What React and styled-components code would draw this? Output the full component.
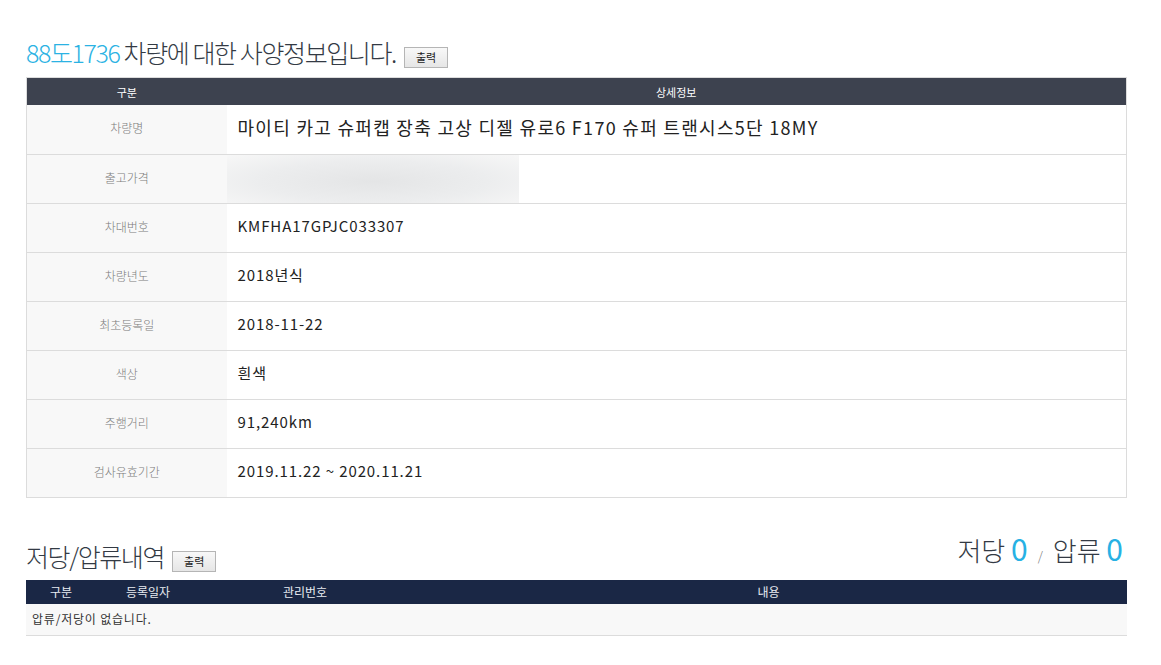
import React from "react";
import styled, { createGlobalStyle } from "styled-components";

const GlobalStyle = createGlobalStyle`
  html, body {
    margin: 0;
    padding: 0;
    background: #fff;
  }
  body {
    font-family: "Noto Sans CJK KR", "Noto Sans", sans-serif;
    color: #333;
  }
`;

const specRows = [
  { label: "차량명", value: "마이티 카고 슈퍼캡 장축 고상 디젤 유로6 F170 슈퍼 트랜시스5단 18MY", big: true },
  { label: "출고가격", value: null },
  { label: "차대번호", value: "KMFHA17GPJC033307" },
  { label: "차량년도", value: "2018년식" },
  { label: "최초등록일", value: "2018-11-22" },
  { label: "색상", value: "흰색" },
  { label: "주행거리", value: "91,240km" },
  { label: "검사유효기간", value: "2019.11.22 ~ 2020.11.21" },
];

export default function App() {
  return (
    <>
      <GlobalStyle />
      <Page>
        <TitleRow>
          <Title>
            <Plate>88도1736</Plate> 차량에 대한 사양정보입니다.
          </Title>
          <PrintButton>출력</PrintButton>
        </TitleRow>

        <SpecTable>
          <colgroup>
            <col style={{ width: 200 }} />
            <col />
          </colgroup>
          <thead>
            <tr>
              <SpecHead>구분</SpecHead>
              <SpecHead>상세정보</SpecHead>
            </tr>
          </thead>
          <tbody>
            {specRows.map((row) => (
              <tr key={row.label}>
                <LabelCell>{row.label}</LabelCell>
                <ValueCell $big={row.big}>
                  {row.value === null ? <Blurred /> : row.value}
                </ValueCell>
              </tr>
            ))}
          </tbody>
        </SpecTable>

        <SectionRow>
          <TitleRow $tight>
            <Title as="h3">저당/압류내역</Title>
            <PrintButton>출력</PrintButton>
          </TitleRow>
          <Counts>
            저당 <Count>0</Count>
            <Slash>/</Slash>
            압류 <Count>0</Count>
          </Counts>
        </SectionRow>

        <LienTable>
          <colgroup>
            <col style={{ width: 70 }} />
            <col style={{ width: 104 }} />
            <col style={{ width: 210 }} />
            <col />
          </colgroup>
          <thead>
            <tr>
              <LienHead>구분</LienHead>
              <LienHead>등록일자</LienHead>
              <LienHead>관리번호</LienHead>
              <LienHead>내용</LienHead>
            </tr>
          </thead>
          <tbody>
            <tr>
              <EmptyCell colSpan={4}>압류/저당이 없습니다.</EmptyCell>
            </tr>
          </tbody>
        </LienTable>
      </Page>
    </>
  );
}

const Page = styled.div`
  width: 1101px;
  margin-left: 26px;
  padding-top: 34px;
`;

const TitleRow = styled.div`
  display: flex;
  align-items: flex-end;
  gap: 8px;
  margin-bottom: ${(p) => (p.$tight ? "0" : "7px")};
`;

const Title = styled.h2`
  margin: 0;
  font-size: 25px;
  font-weight: 300;
  letter-spacing: -1.4px;
  line-height: 36px;
  color: #333a44;
`;

const Plate = styled.span`
  color: #2bb2e3;
`;

const PrintButton = styled.button`
  height: 21px;
  padding: 0 11px;
  margin-bottom: 2px;
  border: 1px solid #b5b5b5;
  background: linear-gradient(#f8f8f8, #e6e6e6);
  font-family: "Noto Sans CJK KR", sans-serif;
  font-size: 11px;
  color: #222;
  line-height: 19px;
`;

const SpecTable = styled.table`
  width: 100%;
  border-collapse: collapse;
  table-layout: fixed;
  border: 1px solid #dcdcdc;
`;

const SpecHead = styled.th`
  height: 27px;
  padding: 0;
  background: #3d424f;
  color: #fff;
  font-size: 11px;
  font-weight: 400;
  text-align: center;
`;

const LabelCell = styled.td`
  height: 49px;
  box-sizing: border-box;
  padding: 0 0 3px;
  background: #f8f8f8;
  border-bottom: 1px solid #dcdcdc;
  color: #7c7c7c;
  font-size: 12px;
  font-weight: 300;
  text-align: center;
`;

const ValueCell = styled.td`
  height: 49px;
  box-sizing: border-box;
  padding: 0 0 4px 11px;
  border-bottom: 1px solid #dcdcdc;
  color: #222;
  font-size: ${(p) => (p.$big ? "18px" : "15px")};
  letter-spacing: ${(p) => (p.$big ? "1.3px" : "0.9px")};
  overflow: hidden;
`;

const Blurred = styled.div`
  width: 292px;
  height: 48px;
  margin: 0 0 -4px -11px;
  background: radial-gradient(ellipse at 50% 55%, #e4e5e6 0%, #ecedee 55%, #f7f7f7 100%);
`;

const SectionRow = styled.div`
  display: flex;
  justify-content: space-between;
  align-items: flex-end;
  margin-top: 32px;
  margin-bottom: 6px;
`;

const Counts = styled.div`
  padding-right: 4px;
  font-size: 26px;
  font-weight: 300;
  line-height: 36px;
  color: #333a44;
`;

const Count = styled.span`
  color: #27b1e4;
  font-size: 30px;
  font-weight: 400;
`;

const Slash = styled.span`
  display: inline-block;
  margin: 0 10px;
  font-size: 13px;
  color: #777;
`;

const LienTable = styled.table`
  width: 100%;
  border-collapse: collapse;
  table-layout: fixed;
`;

const LienHead = styled.th`
  height: 24px;
  padding: 0;
  background: #1a2745;
  color: #e8ebf1;
  font-size: 12px;
  font-weight: 400;
  text-align: center;
`;

const EmptyCell = styled.td`
  height: 32px;
  box-sizing: border-box;
  padding: 0 0 2px 6px;
  background: #f8f8f8;
  border-bottom: 1px solid #dcdcdc;
  color: #333;
  font-size: 12px;
  letter-spacing: 0.8px;
`;
